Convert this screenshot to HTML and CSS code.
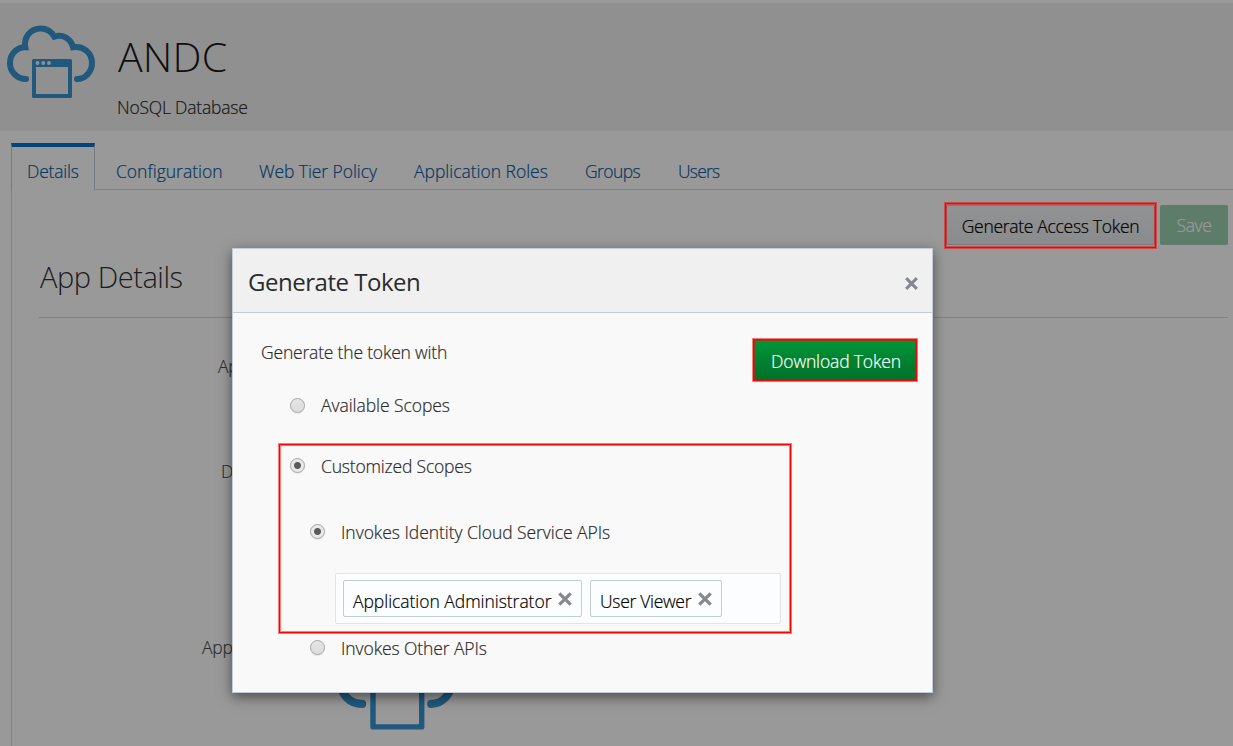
FILE: index.html
```html
<!DOCTYPE html>
<html lang="en">
<head>
<meta charset="utf-8">
<title>ANDC</title>
<link rel="stylesheet" href="styles.css">
</head>
<body>
<svg class="defs" aria-hidden="true">
  <symbol id="cloud-app" viewBox="0 0 102 102">
    <path d="M26 79C16.500 79 10 71.500 10 63C10 53.500 17 47.200 25.300 47.200C23.500 37.500 30.500 28.500 40.500 28.500C46.500 28.500 51.500 31.500 54.300 36.600C62.500 33.800 71 38.600 73 47.200C83.500 45.500 92 53 92 63C92 71.500 85.500 79 77 79" fill="none" stroke="#3694d0" stroke-width="6" stroke-linecap="round"/>
    <path fill="#3694d0" fill-rule="evenodd" d="M33.500 59H70.500Q72 59 72 60.500V96.500Q72 98 70.500 98H33.500Q32 98 32 96.500V60.500Q32 59 33.500 59ZM36 67V94H68V67Z"/>
    <g fill="#f0f0f0"><circle cx="37.500" cy="63" r="1.900"/><circle cx="43.200" cy="63" r="1.900"/><circle cx="49" cy="63" r="1.900"/></g>
  </symbol>
  <symbol id="cross" viewBox="0 0 14 14"><path d="M2 2L12 12M12 2L2 12" stroke="#85898d" stroke-width="2.800" fill="none"/></symbol>
</svg>
<div class="page">
  <header class="app-header">
    <svg class="app-logo"><use href="#cloud-app"/></svg>
    <div class="app-heading">
      <h1 class="app-name">ANDC</h1>
      <p class="app-type">NoSQL Database</p>
    </div>
  </header>
  <nav class="tabs">
    <a class="tab active">Details</a>
    <a class="tab configuration">Configuration</a>
    <a class="tab policy">Web Tier Policy</a>
    <a class="tab roles">Application Roles</a>
    <a class="tab groups">Groups</a>
    <a class="tab users">Users</a>
  </nav>
  <main class="panel">
    <div class="actions">
      <button class="button access">Generate Access Token</button>
      <button class="button save">Save</button>
    </div>
    <h2 class="section-title">App Details</h2>
    <div class="fields">
      <span class="label first">Ap</span>
      <span class="label second">De</span>
      <span class="label third">Appl</span>
    </div>
    <svg class="field-logo"><use href="#cloud-app"/></svg>
  </main>
</div>
<div class="overlay">
  <section class="dialog">
    <header class="dialog-header">
      <h3 class="dialog-title">Generate Token</h3>
      <svg class="close"><use href="#cross"/></svg>
    </header>
    <div class="dialog-body">
      <div class="intro">
        <span class="intro-text">Generate the token with</span>
        <button class="download">Download Token</button>
      </div>
      <div class="option available"><i class="radio"></i><span class="t-available">Available Scopes</span></div>
      <div class="custom">
        <div class="option"><i class="radio on"></i><span class="t-custom">Customized Scopes</span></div>
        <div class="option nested"><i class="radio on"></i><span class="t-identity">Invokes Identity Cloud Service APIs</span></div>
        <div class="chips">
          <span class="chip admin"><span class="t-admin">Application Administrator</span><svg class="remove"><use href="#cross"/></svg></span>
          <span class="chip viewer"><span class="t-viewer">User Viewer</span><svg class="remove"><use href="#cross"/></svg></span>
        </div>
      </div>
      <div class="option nested other"><i class="radio"></i><span class="t-other">Invokes Other APIs</span></div>
    </div>
  </section>
  <div class="highlight"></div>
</div>
</body>
</html>
```
FILE: styles.css
```css
* { box-sizing: border-box; }
body { margin: 0; width: 1233px; height: 746px; overflow: hidden; position: relative; background: #fff; color: #2b2b2b; font: 300 17.5px/24px "Open Sans", "Noto Sans", sans-serif; letter-spacing: -0.2px; white-space: nowrap; -webkit-text-stroke: 0.2px currentColor; }
h1, h2, h3, p { margin: 0; font-weight: 300; }
button { margin: 0; padding: 0; font: inherit; letter-spacing: inherit; border: 0; }
.defs { position: absolute; width: 0; height: 0; }
.page { height: 746px; padding-top: 3px; overflow: hidden; }
.app-header { display: flex; height: 128px; background: #f0f0f0; }
.app-logo { width: 102px; height: 102px; margin-top: -3px; flex: none; }
.app-heading { padding: 26px 0 0 16px; }
.app-name { font-size: 41px; line-height: 54px; color: #1a1a1a; letter-spacing: 0.2px; -webkit-text-stroke: 0; }
.app-type { margin-left: -1px; padding-top: 12px; letter-spacing: -0.2px; }
.tabs { display: flex; height: 59px; padding: 12px 0 0 11px; color: #0d5c9f; }
.tab { height: 47px; padding-top: 16px; border-bottom: 1px solid #d6dadd; letter-spacing: -0.2px; }
.active { width: 84px; padding: 12px 0 0 15px; border: 1px solid #c4ced7; border-top: 4px solid #0572ce; border-bottom: 0; }
.configuration { width: 164px; padding-left: 21px; letter-spacing: 0; }
.policy { width: 155px; letter-spacing: -0.08px; }
.roles { width: 171px; letter-spacing: -0.02px; }
.groups { width: 93px; letter-spacing: -0.6px; }
.users { flex: 1; letter-spacing: -0.8px; }
.panel { height: 556px; margin-left: 11px; border-left: 1px solid #d6dadd; padding: 15px 5px 0 27px; }
.actions { display: flex; justify-content: flex-end; gap: 5px; }
.button { height: 40px; border-radius: 2px; }
.access { width: 209px; padding-top: 1px; color: #000; border: 1px solid #c4ced7; background: linear-gradient(#f3f4f5, #e5e8eb); letter-spacing: -0.3px; }
.save { width: 68px; color: #fff; background: #9bcfaf; letter-spacing: -0.4px; }
.section-title { height: 73px; padding: 10px 0 0 1px; border-bottom: 1px solid #d6dadd; font-size: 29px; line-height: 44px; color: #333; letter-spacing: -0.45px; -webkit-text-stroke: 0; }
.fields { height: 279px; padding-left: 163px; display: grid; grid-template-rows: 105px 176px 24px; padding-top: 36px; }
.label { color: #4d4d4d; }
.first { padding-left: 16px; }
.second { padding-left: 19px; }
.third { padding-left: 0; }
.field-logo { display: block; width: 138px; height: 138px; margin-left: 287.5px; }
.overlay { position: absolute; inset: 0; background: rgba(0,0,0,.4); padding: 248px 0 0 232px; }
.highlight { position: absolute; left: 945px; top: 203px; width: 211px; height: 45px; border: 1px solid #f00; box-shadow: 0 0 0 1px rgba(255,0,0,.5), inset 0 0 0 1px rgba(255,0,0,.5); }
.dialog { width: 701px; height: 445px; border: 1px solid #c2ccd5; background: #f9f9f9; box-shadow: 0 4px 12px rgba(0,0,0,.5); }
.dialog-header { display: flex; align-items: center; justify-content: space-between; height: 64px; padding: 4px 13px 0 15px; background: #f0f0f0; border-bottom: 1px solid #c2ccd5; }
.dialog-title { font-size: 24px; font-weight: 400; line-height: 34px; margin-top: -2px; color: #2b2b2b; letter-spacing: -0.48px; -webkit-text-stroke: 0; }
.close { width: 15px; height: 15px; margin-top: 2px; }
.dialog-body { padding: 26px 15px 0 46px; }
.intro { display: flex; justify-content: space-between; height: 42px; }
.intro-text { margin: 1px 0 0 -18px; letter-spacing: -0.19px; }
.download { width: 164px; height: 42px; padding: 2px 0 0 2px; color: #fff; border: 1px solid #f00; background: linear-gradient(#009639, #00702a); box-shadow: 0 0 0 1px rgba(255,0,0,.5), inset 0 0 0 1px rgba(255,0,0,.6); letter-spacing: -0.15px; }
.option { display: flex; align-items: center; gap: 16px; height: 24px; }
.available { padding-left: 11px; margin-top: 12px; letter-spacing: -0.06px; }
.radio { width: 15px; height: 15px; border: 1px solid #a5a5a5; border-radius: 50%; background: linear-gradient(#e5e5e5, #ddd); box-shadow: 0 1px 1px rgba(0,0,0,.08); flex: none; }
.custom .radio, .other .radio { margin-top: -2px; }
.on { background: radial-gradient(circle, #5b5b5b 3px, #e9e9e9 4px); }
.custom { width: 512px; height: 189px; margin-top: 27px; border: 1px solid #f00; box-shadow: 0 0 0 1px rgba(255,0,0,.5), inset 0 0 0 1px rgba(255,0,0,.5); padding: 9px 0 0 10px; letter-spacing: -0.18px; }
.t-identity { letter-spacing: -0.05px; }
.nested { padding-left: 20px; }
.custom .nested { margin-top: 42px; }
.chips { display: flex; gap: 8px; width: 446px; height: 51px; margin: 29px 0 0 45px; padding: 6px 7px; border: 1px solid #dfe4e7; border-radius: 2px; background: #fcfdfe; color: #000; letter-spacing: -0.04px; }
.chip { display: flex; align-items: center; justify-content: space-between; height: 37px; padding: 4px 8px 0 9px; border: 1px solid #c2ccd5; border-radius: 2px; }
.admin { width: 239px; }
.viewer { width: 132px; letter-spacing: -0.3px; }
.remove { width: 16px; height: 16px; margin-top: -3px; }
.other { padding-left: 31px; margin-top: 3px; letter-spacing: -0.1px; }
```
